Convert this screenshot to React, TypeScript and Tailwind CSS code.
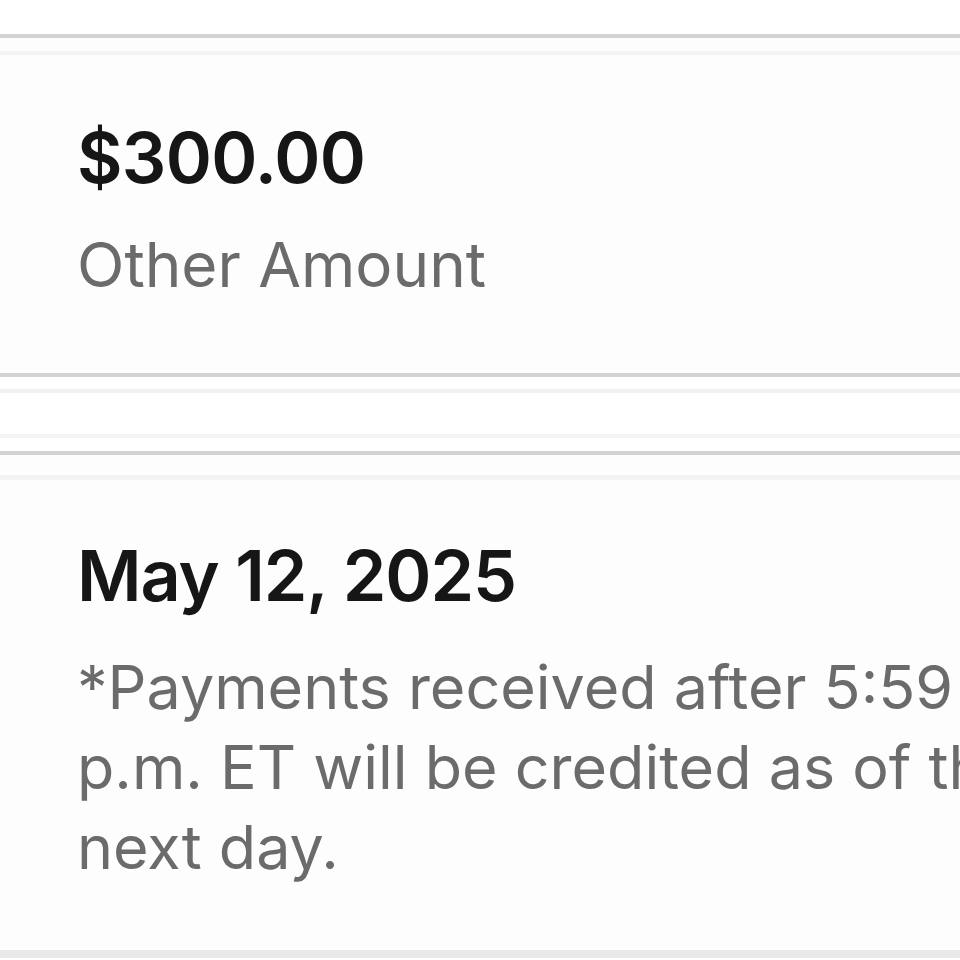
import React from 'react';

const font = { fontFamily: 'Inter, "Liberation Sans", Arial, sans-serif' };

export default function App() {
  return (
    <div className="h-[960px] w-[960px] overflow-hidden bg-white" style={font}>
      <div className="h-[34px]" />

      {/* amount card */}
      <div className="border-y-4 border-[#d3d3d3] bg-[#fdfdfd]">
        <div className="h-[13px]" />
        <div className="h-[4px] bg-[#f3f3f3]" />
        <div className="pl-[77px] pt-[68px] pb-[77px]">
          <div className="text-[70px] leading-none font-semibold tracking-[-0.01em] text-[#161616] whitespace-nowrap">
            $300.00
          </div>
          <div className="mt-[41px] text-[62px] leading-none text-[#6b6b6b] whitespace-nowrap">
            Other Amount
          </div>
        </div>
      </div>

      <div className="h-[12px]" />
      <div className="h-[4px] bg-[#f1f1f1]" />
      <div className="h-[41px]" />
      <div className="h-[4px] bg-[#f4f4f4]" />
      <div className="h-[13px]" />

      {/* date card */}
      <div className="border-t-4 border-[#d3d3d3] bg-[#fdfdfd]">
        <div className="h-[20px]" />
        <div className="h-[5px] bg-[#f3f3f3]" />
        <div className="pl-[77px] pt-[61px] pb-[63px]">
          <div className="text-[70px] leading-none font-semibold tracking-[-0.015em] text-[#161616] whitespace-nowrap">
            May 12, 2025
          </div>
          <p className="mt-[36px] text-[61px] leading-[80px] text-[#6b6b6b] whitespace-nowrap">
            *Payments received after 5:59
            <br />
            p.m. ET will be credited as of the
            <br />
            next day.
          </p>
        </div>
        <div className="h-[8px] bg-[#e9e9e9]" />
      </div>
    </div>
  );
}
